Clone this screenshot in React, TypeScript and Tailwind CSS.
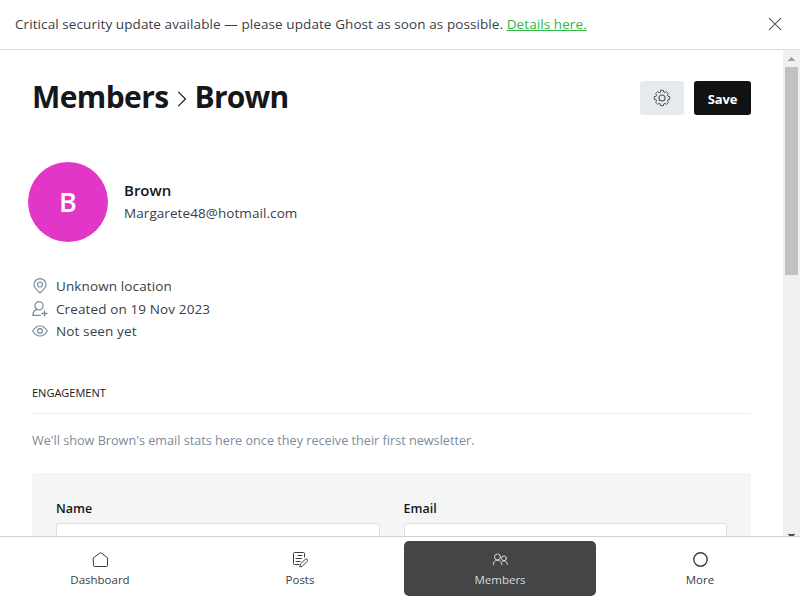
import type { ReactNode } from "react";

function Icon({ className, viewBox = "0 0 16 16", children }: { className: string; viewBox?: string; children: ReactNode }) {
  return (
    <svg className={className} viewBox={viewBox} fill="none" stroke="currentColor" strokeLinecap="round" strokeLinejoin="round">
      {children}
    </svg>
  );
}

// Outline of an eight-toothed cog centred on (9, 9): each tooth has a flat top and sloping sides.
const cogOutline = Array.from({ length: 8 }, (_, tooth) =>
  [
    [-15, 6.2],
    [-11, 7.8],
    [11, 7.8],
    [15, 6.2],
  ].map(([offset, radius]) => {
    const angle = ((tooth * 45 + offset) * Math.PI) / 180;
    return `${(9 + radius * Math.sin(angle)).toFixed(2)},${(9 - radius * Math.cos(angle)).toFixed(2)}`;
  }),
)
  .flat()
  .join(" ");

function Banner() {
  return (
    <header className="flex h-[50px] shrink-0 items-center justify-between border-b border-[#dddedf] pr-[18px] pl-[15px]">
      <p className="mb-px text-[13.5px] leading-5 tracking-[0.085px] whitespace-nowrap text-[#394047]">
        Critical security update available — please update Ghost as soon as possible.{" "}
        <a className="text-[#30b543] underline">Details here.</a>
      </p>
      <Icon className="mb-px size-[14px] text-[#50565d]" viewBox="0 0 14 14">
        <path d="M1.3 1.3l11.4 11.4M12.7 1.3L1.3 12.7" strokeWidth="1.1" />
      </Icon>
    </header>
  );
}

function TitleBar() {
  return (
    <div className="flex h-[34px] items-center justify-between">
      <h1 className="mb-[3px] flex items-center text-[30px] leading-[34px] font-bold whitespace-nowrap text-[#15171a]">
        <span className="tracking-[-0.6px]">Members</span>
        <Icon className="mt-[5px] mr-[8px] ml-2 h-4 w-[10px]" viewBox="0 0 10 16">
          <path d="M1.5 1.2L8.500 8l-7 6.800" strokeWidth="1.1" />
        </Icon>
        <span className="tracking-[-0.75px]">Brown</span>
      </h1>
      <div className="flex gap-[10px]">
        <button className="flex h-[34px] w-11 items-center justify-center rounded-[3px] bg-[#e6eaed] text-[#50575d]">
          <Icon className="size-[18px]" viewBox="0 0 18 18">
            <circle cx="9" cy="9" r="3" strokeWidth="1.1" />
            <polygon points={cogOutline} />
          </Icon>
        </button>
        <button className="flex h-[34px] w-[57px] items-center justify-center rounded-[3px] bg-[#111214] pt-[2px] text-[13px] leading-5 font-bold tracking-[-0.1px] text-white">
          Save
        </button>
      </div>
    </div>
  );
}

function Fact({ icon, children }: { icon: ReactNode; children: ReactNode }) {
  return (
    <li className="flex h-[22.5px] items-center gap-2">
      <span className="flex w-4 justify-center text-[#7c8b9a]">{icon}</span>
      <span className="text-[13.5px] leading-5 tracking-[0.12px] whitespace-nowrap text-[#394047]">{children}</span>
    </li>
  );
}

function Details() {
  return (
    <>
      <section className="mt-[47px] -ml-1 flex h-20 items-center gap-4">
        <div className="flex size-20 items-center justify-center rounded-full bg-[#e236c7] pt-px text-[27px] font-semibold text-white">B</div>
        <div className="mb-[2px] text-[13.5px] whitespace-nowrap">
          <h3 className="text-[15px] leading-[23px] font-semibold text-[#15171a]">Brown</h3>
          <p className="leading-[22px] tracking-[0.075px] text-[#394047]">Margarete48@hotmail.com</p>
        </div>
      </section>
      <ul className="mt-[33px]">
        <Fact
          icon={
            <Icon className="size-4">
              <path d="M8 15C6.500 13.200 2 10.200 2 6.700a6 6 0 0 1 12 0c0 3.500-4.500 6.500-6 8.300Z" strokeWidth="1.2" />
              <circle cx="8" cy="6.500" r="2.500" strokeWidth="1.2" />
            </Icon>
          }
        >
          Unknown location
        </Fact>
        <Fact
          icon={
            <Icon className="size-4">
              <circle cx="7" cy="4.800" r="4.100" strokeWidth="1.300" />
              <path d="M4.500 8.700C2 9.500 1 11.500.8 14.300h7.700M10 12.500h5M12.500 10v5" strokeWidth="1.300" />
            </Icon>
          }
        >
          Created on 19 Nov 2023
        </Fact>
        <Fact
          icon={
            <Icon className="size-4">
              <path d="M.7 8C2.500 5 5 3 8 3s5.500 2 7.300 5C13.500 11 11 13 8 13S2.500 11 .7 8Z" strokeWidth="1.200" />
              <circle cx="8" cy="8" r="2.400" strokeWidth="1.200" />
            </Icon>
          }
        >
          Not seen yet
        </Fact>
      </ul>
    </>
  );
}

function Field({ label }: { label: string }) {
  return (
    <label className="flex-1 text-[12.5px] leading-5 font-semibold text-[#15171a]">
      {label}
      <div className="mt-[4px] h-[38px] rounded-[3px] border border-[#dce1e4] bg-white" />
    </label>
  );
}

function ScrollBar() {
  return (
    <div className="flex w-[17px] shrink-0 flex-col items-center bg-[#f0f0f0]">
      <svg className="h-[17px] w-[17px] shrink-0" viewBox="0 0 17 17" fill="#a0a0a0" shapeRendering="crispEdges">
        <path d="M5 11L8.500 7L12 11Z" />
      </svg>
      <div className="h-[208px] w-[13px] bg-[#c1c1c1]" />
      <svg className="mt-auto h-[2px] w-[17px]" viewBox="0 0 17 2" fill="#505050" shapeRendering="crispEdges">
        <path d="M5 0h7v1h-1v1H6V1H5Z" />
      </svg>
    </div>
  );
}

function NavItem({ label, icon, active = false }: { label: string; icon: ReactNode; active?: boolean }) {
  return (
    <a
      className={
        active
          ? "mx-1 flex flex-1 flex-col items-center rounded-[5px] bg-[#444547] pt-[11px] text-[#d8dadc]"
          : "mx-1 flex flex-1 flex-col items-center rounded-[5px] pt-[11px] text-[#394047]"
      }
    >
      {icon}
      <span className="mt-[3px] text-[11.5px] leading-[18px]">{label}</span>
    </a>
  );
}

function BottomNav() {
  return (
    <nav className="flex h-16 shrink-0 border-t border-[#ced4d9] bg-white py-1">
      <NavItem
        label="Dashboard"
        icon={
          <Icon className="size-4">
            <path d="M1.500 5.700L8.500.6l7 5.100v8q0 .8-.8.8H2.300q-.8 0-.8-.8Z" />
          </Icon>
        }
      />
      <NavItem
        label="Posts"
        icon={
          <Icon className="size-4">
            <path d="M12.500 5v-3.600q0-.9-.9-.9H2.400q-.9 0-.9.9v10.200q0 .9.900.9h4.600M6 3.500h4M4 6.500h5.500M4 9.500H8M7.900 14.600l.6-2.700 4.700-4.600a1.300 1.300 0 0 1 2 2l-4.600 4.700Z" />
          </Icon>
        }
      />
      <NavItem
        active
        label="Members"
        icon={
          <Icon className="size-4">
            <circle cx="5.500" cy="5" r="3" />
            <path d="M1.200 12.800c0-2.700 1.700-4.600 4.300-4.600s4.400 1.900 4.400 4.600M10.300 9.200c.4-.2.900-.3 1.500-.3 2.200 0 3.600 1.500 3.600 3.700" />
            <circle cx="12" cy="6.300" r="2.400" />
          </Icon>
        }
      />
      <NavItem
        label="More"
        icon={
          <Icon className="size-4">
            <circle cx="8.500" cy="7.500" r="6.700" strokeWidth="1.400" />
          </Icon>
        }
      />
    </nav>
  );
}

export default function App() {
  return (
    <div className="flex h-[600px] w-[800px] flex-col overflow-hidden bg-white font-['Open_Sans','Noto_Sans',sans-serif]">
      <Banner />
      <div className="flex min-h-0 flex-1">
        <main className="min-w-0 flex-1 overflow-hidden px-8 pt-[31px]">
          <TitleBar />
          <Details />
          <h4 className="mt-[40px] border-b border-[#ebeef0] pb-[10px] text-[11px] leading-5 font-medium text-[#15171a]">ENGAGEMENT</h4>
          <p className="mt-4 text-[12.65px] leading-5 whitespace-nowrap text-[#7c8b9a]">
            We'll show Brown's email stats here once they receive their first newsletter.
          </p>
          <div className="mt-[23px] flex h-[200px] gap-6 rounded-[3px] bg-[#f4f5f5] px-6 pt-[26px]">
            <Field label="Name" />
            <Field label="Email" />
          </div>
        </main>
        <ScrollBar />
      </div>
      <BottomNav />
    </div>
  );
}
